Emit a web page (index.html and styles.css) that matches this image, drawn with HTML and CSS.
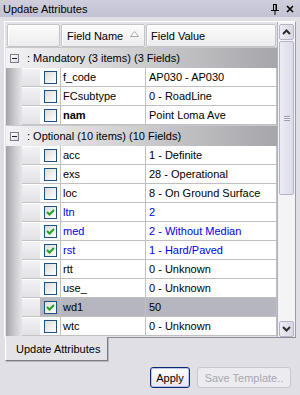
FILE: index.html
```html
<!DOCTYPE html>
<html lang="en">
  <head>
    <meta charset="UTF-8" />
    <meta name="viewport" content="width=device-width, initial-scale=1.0" />
    <title>Update Attributes</title>
    <link rel="stylesheet" href="styles.css">
  </head>
  <body>
    <div class="titlebar">
      <span class="title">Update Attributes</span>
      <span class="title-icons">
        <svg class="pin" width="8" height="11" viewBox="0 0 8 11">
          <path d="M2 0.5 H5.5 V6 M2.5 0.5 V6 M5 0.5 V6" stroke="#000" fill="none" stroke-width="1" />
          <path d="M0 6.5 H8 M4 6.5 V11" stroke="#000" stroke-width="1" />
        </svg>
        <svg class="close" width="8" height="8" viewBox="0 0 8 8">
          <path d="M1 1 L7 7 M7 1 L1 7" stroke="#000" stroke-width="1.6" />
        </svg>
      </span>
    </div>

    <div class="panel">
      <div class="grid">
        <div class="table">
          <div class="head">
            <div class="head-cell corner"></div>
            <div class="head-cell name">
              Field Name
              <svg class="sort" width="9" height="6" viewBox="0 0 9 6">
                <path d="M4.5 0.5 L8.5 5.5 H0.5 Z" fill="#fff" stroke="#a8a8a8" stroke-width="1" />
              </svg>
            </div>
            <div class="head-cell value">Field Value</div>
          </div>

          <div class="group-row"><span class="minus"></span>: Mandatory (3 items) (3 Fields)</div>
          <div class="group-body">
            <div class="indent"></div>
            <div class="rows">
              <div class="row">
                <div class="row-head"></div>
                <div class="check-cell"><span class="check"></span></div>
                <div class="cell name">f_code</div>
                <div class="cell value">AP030 - AP030</div>
              </div>
              <div class="row">
                <div class="row-head"></div>
                <div class="check-cell"><span class="check"></span></div>
                <div class="cell name">FCsubtype</div>
                <div class="cell value">0 - RoadLine</div>
              </div>
              <div class="row">
                <div class="row-head"></div>
                <div class="check-cell"><span class="check"></span></div>
                <div class="cell name bold">nam</div>
                <div class="cell value">Point Loma Ave</div>
              </div>
            </div>
          </div>

          <div class="group-row"><span class="minus"></span>: Optional (10 items) (10 Fields)</div>
          <div class="group-body">
            <div class="indent"></div>
            <div class="rows">
              <div class="row">
                <div class="row-head"></div>
                <div class="check-cell"><span class="check"></span></div>
                <div class="cell name">acc</div>
                <div class="cell value">1 - Definite</div>
              </div>
              <div class="row">
                <div class="row-head"></div>
                <div class="check-cell"><span class="check"></span></div>
                <div class="cell name">exs</div>
                <div class="cell value">28 - Operational</div>
              </div>
              <div class="row">
                <div class="row-head"></div>
                <div class="check-cell"><span class="check"></span></div>
                <div class="cell name">loc</div>
                <div class="cell value">8 - On Ground Surface</div>
              </div>
              <div class="row changed">
                <div class="row-head"></div>
                <div class="check-cell"><span class="check on"><svg width="11" height="11" viewBox="0 0 11 11"><path d="M2 5 L4.5 7.5 L9 3" stroke="#21a121" stroke-width="2" fill="none" /></svg></span></div>
                <div class="cell name">ltn</div>
                <div class="cell value">2</div>
              </div>
              <div class="row changed">
                <div class="row-head"></div>
                <div class="check-cell"><span class="check on"><svg width="11" height="11" viewBox="0 0 11 11"><path d="M2 5 L4.5 7.5 L9 3" stroke="#21a121" stroke-width="2" fill="none" /></svg></span></div>
                <div class="cell name">med</div>
                <div class="cell value">2 - Without Median</div>
              </div>
              <div class="row changed">
                <div class="row-head"></div>
                <div class="check-cell"><span class="check on"><svg width="11" height="11" viewBox="0 0 11 11"><path d="M2 5 L4.5 7.5 L9 3" stroke="#21a121" stroke-width="2" fill="none" /></svg></span></div>
                <div class="cell name">rst</div>
                <div class="cell value">1 - Hard/Paved</div>
              </div>
              <div class="row">
                <div class="row-head"></div>
                <div class="check-cell"><span class="check"></span></div>
                <div class="cell name">rtt</div>
                <div class="cell value">0 - Unknown</div>
              </div>
              <div class="row">
                <div class="row-head"></div>
                <div class="check-cell"><span class="check"></span></div>
                <div class="cell name">use_</div>
                <div class="cell value">0 - Unknown</div>
              </div>
              <div class="row selected">
                <div class="row-head"></div>
                <div class="check-cell"><span class="check on"><svg width="11" height="11" viewBox="0 0 11 11"><path d="M2 5 L4.5 7.5 L9 3" stroke="#21a121" stroke-width="2" fill="none" /></svg></span></div>
                <div class="cell name">wd1</div>
                <div class="cell value">50</div>
              </div>
              <div class="row">
                <div class="row-head"></div>
                <div class="check-cell"><span class="check"></span></div>
                <div class="cell name">wtc</div>
                <div class="cell value">0 - Unknown</div>
              </div>
            </div>
          </div>
        </div>

        <div class="scrollbar">
          <div class="sb-btn">
            <svg width="9" height="6" viewBox="0 0 9 6"><path d="M1 5 L4.5 1.5 L8 5" stroke="#2e2e2e" stroke-width="2" fill="none" /></svg>
          </div>
          <div class="sb-thumb"><span class="grip"></span></div>
          <div class="sb-track"></div>
          <div class="sb-btn">
            <svg width="9" height="6" viewBox="0 0 9 6"><path d="M1 1 L4.5 4.5 L8 1" stroke="#2e2e2e" stroke-width="2" fill="none" /></svg>
          </div>
        </div>
      </div>

      <div class="tabs">
        <div class="tab">Update Attributes</div>
        <div class="tab-fill"></div>
      </div>

      <div class="actions">
        <button class="btn default">Apply</button>
        <button class="btn" disabled>Save Template..</button>
      </div>
    </div>
  </body>
</html>
```

FILE: styles.css
```css
* {
  margin: 0;
  padding: 0;
  box-sizing: border-box;
}

body {
  width: 300px;
  height: 395px;
  overflow: hidden;
  background-color: #e0dfe5;
  color: #000;
  font-family: "Liberation Sans", Arial, sans-serif;
  font-size: 11px;
}

/* title bar */
.titlebar {
  display: flex;
  justify-content: space-between;
  align-items: center;
  height: 17px;
  padding: 0 6px 0 3px;
  background: linear-gradient(#cfcedd, #c3c2d3);
  font-size: 11px;
}
.title-icons {
  display: flex;
  align-items: center;
  gap: 7px;
}
.pin {
  margin-top: 1px;
}

.panel {
  padding: 4px 4px 0 4px;
}

/* grid */
.grid {
  display: flex;
  height: 316px;
  border: 1px solid;
  border-color: #fff #9c9ba8 #9c9ba8 #fff;
  border-bottom: none;
  background-color: #e4e3e8;
}
.table {
  flex: 1;
  padding: 2px 0 0 1px;
}

.head {
  display: flex;
  gap: 1px;
  height: 23px;
}
.head-cell {
  display: flex;
  align-items: center;
  padding-left: 5px;
  border: 1px solid #c3c3c8;
  border-radius: 2px;
  background: linear-gradient(#fcfcfc, #ececee);
  box-shadow: inset 1px 1px 0 #fff;
}
.head-cell.corner {
  width: 53px;
  margin-left: 1px;
}
.head-cell.name {
  width: 84px;
  position: relative;
}
.head-cell.value {
  width: 130px;
  padding-left: 4px;
}
.sort {
  position: absolute;
  right: 5px;
  top: 6px;
}

.group-row {
  display: flex;
  align-items: center;
  height: 21px;
  padding-left: 4px;
  border-top: 1px solid #c8c8cc;
  background: linear-gradient(to right, #f3f3f5, #a6a6aa);
}
.minus {
  position: relative;
  width: 9px;
  height: 9px;
  margin-right: 8px;
  border: 1px solid #7c7c88;
  background: linear-gradient(135deg, #fff, #dcdce4);
}
.minus::after {
  content: "";
  position: absolute;
  left: 1px;
  top: 3px;
  width: 5px;
  height: 1px;
  background-color: #222;
}

.group-body {
  display: flex;
}
.indent {
  width: 16px;
  background: linear-gradient(to right, #a2a2a8, #c8c8cc 50%, #e6e6ea);
}
.rows {
  flex: 1;
}
.row {
  display: flex;
  height: 19px;
}
.row-head {
  width: 18px;
  border-top: 1px solid #fff;
  border-bottom: 1px solid #c4c4c8;
  background: linear-gradient(#f2f2f4, #e2e2e6);
}
.check-cell {
  display: flex;
  align-items: center;
  width: 21px;
  padding-left: 4px;
  border-right: 1px solid #c0c0c0;
  border-bottom: 1px solid #c0c0c0;
  background-color: #fff;
}
.check {
  display: flex;
  justify-content: center;
  align-items: center;
  width: 13px;
  height: 13px;
  border: 1px solid #1c5180;
  background: linear-gradient(135deg, #dcdcd7, #fff);
}
.cell {
  display: flex;
  align-items: center;
  border-right: 1px solid #c0c0c0;
  border-bottom: 1px solid #c0c0c0;
  background-color: #fff;
  white-space: nowrap;
  overflow: hidden;
}
.cell.name {
  width: 85px;
  padding-left: 2px;
}
.cell.value {
  width: 131px;
  padding-left: 3px;
}
.bold {
  font-weight: bold;
}
.changed .cell {
  color: #0000f0;
}
.selected .cell,
.selected .check-cell {
  background-color: #b6b6be;
}

/* scrollbar */
.scrollbar {
  display: flex;
  flex-direction: column;
  width: 18px;
  padding: 2px 1px 0 1px;
  border-left: 1px solid #b0b0b8;
  background-color: #f4f4f6;
}
.sb-btn {
  display: flex;
  justify-content: center;
  align-items: center;
  height: 16px;
  border: 1px solid #b4b4c6;
  border-radius: 2px;
  background: linear-gradient(to right, #ececf4, #d8d8e6);
}
.sb-thumb {
  display: flex;
  justify-content: center;
  align-items: center;
  height: 154px;
  margin-top: 1px;
  border: 1px solid #b4b4c6;
  border-radius: 2px;
  background: linear-gradient(to right, #ececf4, #dcdce8);
}
.grip {
  width: 6px;
  height: 5px;
  border-top: 1px solid #9c9cb0;
  border-bottom: 1px solid #9c9cb0;
  background: linear-gradient(#f0f0f4 40%, #9c9cb0 40%, #9c9cb0 60%, #f0f0f4 60%);
}
.sb-track {
  flex: 1;
}

/* tab strip */
.tabs {
  display: flex;
  height: 24px;
}
.tab {
  display: flex;
  align-items: center;
  width: 103px;
  margin-left: 1px;
  padding-left: 10px;
  border-left: 1px solid #fff;
  border-right: 1px solid #7c7c84;
  border-bottom: 1px solid #7c7c84;
  box-shadow: 1px 1px 0 #b8b8c0;
  background-color: #e4e3e8;
}
.tab-fill {
  flex: 1;
  border-top: 1px solid #8c8c96;
  margin-right: 0;
}

/* buttons */
.actions {
  display: flex;
  justify-content: flex-end;
  gap: 7px;
  margin-top: 6px;
  padding-right: 5px;
}
.btn {
  height: 21px;
  font-family: inherit;
  font-size: 11px;
  border-radius: 3px;
}
.btn.default {
  width: 40px;
  border: 1px solid #0a2a6e;
  background: linear-gradient(#ffffff, #e6e6ec);
  box-shadow: inset 0 0 0 1px #b8c4ee;
  color: #000;
}
.btn:disabled {
  width: 94px;
  border: 1px solid #c8c8cc;
  background-color: #ececf0;
  color: #a8a8ae;
}
```
